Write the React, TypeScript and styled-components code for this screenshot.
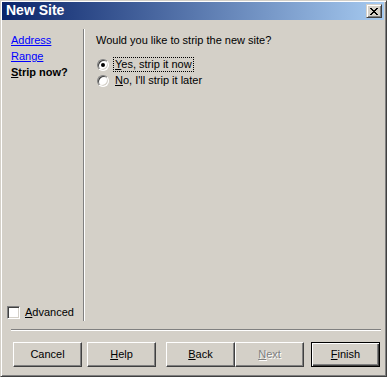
import { createGlobalStyle, styled } from "styled-components"

const GlobalStyle = createGlobalStyle`
  html, body {
    margin: 0;
    padding: 0;
    background: #d4d0c8;
  }
  * {
    box-sizing: border-box;
  }
`

const face = "#d4d0c8"
const shadow = "#808080"
const darkShadow = "#404040"

const Window = styled.div`
  width: 387px;
  height: 377px;
  display: flex;
  flex-direction: column;
  background: ${face};
  border: 1px solid;
  border-color: ${face} ${darkShadow} ${darkShadow} ${face};
  box-shadow: inset 1px 1px #fff, inset -1px -1px ${shadow};
  padding: 1px 2px 2px 1px;
  font-family: "Liberation Sans", Arial, sans-serif;
  font-size: 11px;
  line-height: 13px;
  color: #000;
`

const TitleBar = styled.div`
  height: 18px;
  flex: none;
  display: flex;
  align-items: center;
  justify-content: space-between;
  padding: 0 2px 0 4px;
  background: linear-gradient(to right, #0a246a, #a6caf0);
`

const TitleText = styled.span`
  color: #fff;
  font-weight: bold;
  font-size: 14px;
  line-height: 16px;
  padding-bottom: 2px;
`

const CaptionButton = styled.div`
  width: 16px;
  height: 14px;
  display: flex;
  align-items: center;
  justify-content: center;
  background: ${face};
  border: 1px solid;
  border-color: ${face} ${darkShadow} ${darkShadow} ${face};
  box-shadow: inset 1px 1px #fff, inset -1px -1px ${shadow};
`

const Body = styled.div`
  flex: 1;
  display: flex;
  flex-direction: column;
  padding-top: 9px;
`

const Main = styled.div`
  height: 292px;
  display: flex;
`

const Nav = styled.div`
  width: 83px;
  flex: none;
  display: flex;
  flex-direction: column;
  justify-content: space-between;
  border-right: 1px solid #fff;
  box-shadow: inset -1px 0 ${shadow};
  padding: 3px 0 2px 0;
`

const NavList = styled.div`
  display: flex;
  flex-direction: column;
  padding-left: 9px;
  line-height: 16px;
`

const NavLink = styled.a`
  color: #0000ff;
  text-decoration: underline;
  cursor: pointer;
`

const NavCurrent = styled.span`
  font-weight: bold;
`

const CheckRow = styled.label`
  display: flex;
  align-items: center;
  gap: 5px;
  padding-left: 5px;
`

const CheckBox = styled.span`
  width: 13px;
  height: 13px;
  background: #fff;
  border: 1px solid;
  border-color: ${shadow} #fff #fff ${shadow};
  box-shadow: inset 1px 1px ${darkShadow}, inset -1px -1px ${face};
`

const Content = styled.div`
  flex: 1;
  padding: 5px 0 0 11px;
`

const Question = styled.div``

const RadioGroup = styled.div`
  display: flex;
  flex-direction: column;
  gap: 1px;
  margin-top: 10px;
  padding-left: 1px;
`

const RadioRow = styled.label`
  display: flex;
  align-items: center;
  gap: 4px;
`

const RadioCircle = styled.span<{ $checked?: boolean }>`
  width: 12px;
  height: 12px;
  border-radius: 50%;
  display: flex;
  align-items: center;
  justify-content: center;
  background: #fff;
  border: 1px solid;
  border-color: ${shadow} #fff #fff ${shadow};
  box-shadow: inset 1px 1px ${darkShadow}, inset -1px -1px ${face};

  &::after {
    content: "";
    width: 4px;
    height: 4px;
    border-radius: 50%;
    background: ${(p) => (p.$checked ? "#000" : "transparent")};
  }
`

const RadioLabel = styled.span<{ $focused?: boolean }>`
  padding: 0 1px;
  border: 1px dotted ${(p) => (p.$focused ? "#000" : "transparent")};
`

const Footer = styled.div`
  display: flex;
  flex-direction: column;
`

const Rule = styled.div`
  height: 2px;
  margin: 8px 3px 0 9px;
  border-top: 1px solid ${shadow};
  border-bottom: 1px solid #fff;
`

const ButtonRow = styled.div`
  display: flex;
  margin-top: 11px;
  padding-left: 11px;
`

const Button = styled.div<{ $space?: number; $default?: boolean; $disabled?: boolean }>`
  width: 69px;
  height: 25px;
  margin-left: ${(p) => p.$space ?? 0}px;
  display: flex;
  align-items: center;
  justify-content: center;
  background: ${face};
  border: 1px solid;
  border-color: ${(p) => (p.$default ? "#000" : `#fff ${darkShadow} ${darkShadow} #fff`)};
  box-shadow: ${(p) =>
    p.$default
      ? `inset 1px 1px #fff, inset -1px -1px ${darkShadow}, inset -2px -2px ${shadow}`
      : `inset -1px -1px ${shadow}`};
  color: ${(p) => (p.$disabled ? shadow : "#000")};
  text-shadow: ${(p) => (p.$disabled ? "1px 1px #fff" : "none")};
`

const CloseGlyph = () => (
  <svg width="8" height="7" viewBox="0 0 8 7" shapeRendering="crispEdges">
    <path
      d="M0 0h2v1H0zM6 0h2v1H6zM1 1h2v1H1zM5 1h2v1H5zM2 2h4v1H2zM3 3h2v1H3zM2 4h4v1H2zM1 5h2v1H1zM5 5h2v1H5zM0 6h2v1H0zM6 6h2v1H6z"
      fill="#000"
    />
  </svg>
)

export default function App() {
  return (
    <>
      <GlobalStyle />
      <Window>
        <TitleBar>
          <TitleText>New Site</TitleText>
          <CaptionButton>
            <CloseGlyph />
          </CaptionButton>
        </TitleBar>
        <Body>
          <Main>
            <Nav>
              <NavList>
                <NavLink>Address</NavLink>
                <NavLink>Range</NavLink>
                <NavCurrent>
                  <u>S</u>trip now?
                </NavCurrent>
              </NavList>
              <CheckRow>
                <CheckBox />
                <span>
                  <u>A</u>dvanced
                </span>
              </CheckRow>
            </Nav>
            <Content>
              <Question>Would you like to strip the new site?</Question>
              <RadioGroup>
                <RadioRow>
                  <RadioCircle $checked />
                  <RadioLabel $focused>
                    <u>Y</u>es, strip it now
                  </RadioLabel>
                </RadioRow>
                <RadioRow>
                  <RadioCircle />
                  <RadioLabel>
                    <u>N</u>o, I'll strip it later
                  </RadioLabel>
                </RadioRow>
              </RadioGroup>
            </Content>
          </Main>
          <Footer>
            <Rule />
            <ButtonRow>
              <Button>Cancel</Button>
              <Button $space={5}>
                <span>
                  <u>H</u>elp
                </span>
              </Button>
              <Button $space={10}>
                <span>
                  <u>B</u>ack
                </span>
              </Button>
              <Button $disabled>
                <span>
                  <u>N</u>ext
                </span>
              </Button>
              <Button $space={7} $default>
                <span>
                  <u>F</u>inish
                </span>
              </Button>
            </ButtonRow>
          </Footer>
        </Body>
      </Window>
    </>
  )
}
